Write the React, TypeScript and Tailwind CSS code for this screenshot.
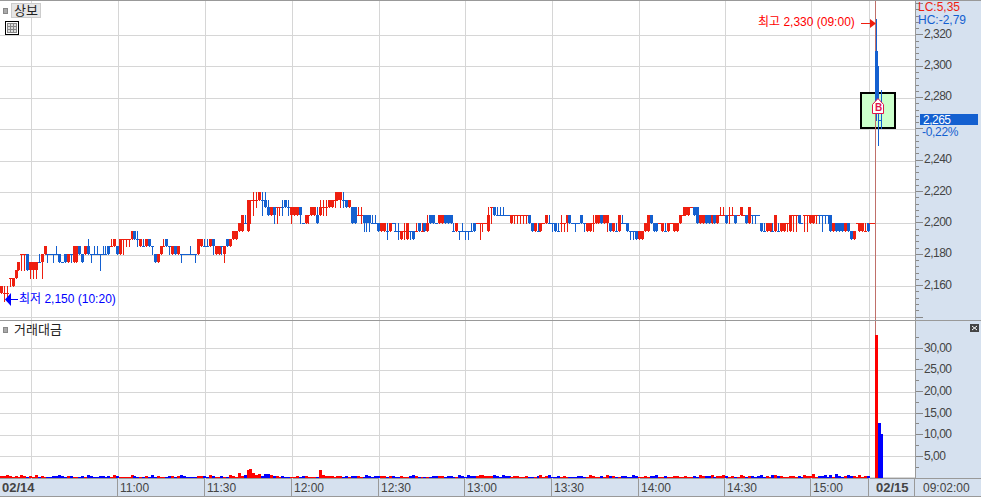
const fontStack = "[font-family:'Liberation_Sans','Noto_Sans_CJK_KR',sans-serif]";

// c top bottom [high low], levels are 5-won ticks: a = 2,200
const tape = `r21 r1120 r1120 r3332 r32 r43 r54 r6654 r6654 b64 r5453 r5453 r5453 b5565 r6563 r76
b6665 b66 b6665 b6676 b65 b55 b65 r65 b6665 r75 r75 b76 b65 r76 b7686 b6665 b6676 b6676 b6664 b6676 b6676 b76
r7787 r87 b76 r86 r8886 r8887 r8887 r98 b98 b8897 r87 b7787 r87 b87 b7766 b65 r65 r76 r7787 b87 b7766 r76 b76 r76
b6665 b66 b66 b6676 b66 b6665 r86 r87 b7787 b7787 r87 b8786 r76 r76 b7766 r7675 b87 r87 r98 r98 ra9 rb9 baaba
rd9 rddda rddeb rddec red bddeb bdcec bcbdb rcb bcbca rccca rcccb bccdb bdcdc bccdb rcbca rcb rcb bcbca baa
rba rbbba rcb rcb bbacb rcbdb rccdb rccdb rdc rdc rddec red redec bddec bdc rdc bca bca rbbcb rbbca
bbab9 bbab9 bbab9 baaba baaba ba9 ra9 ra9 b99a8 ra9 baa b99a9 b99a8 r98 r99a8 ra8 b9998 b98 r99a9 ba9 r99a9 ba9
ra9b9 bba bba baa rba rba bba bba bba b99a9 ra9 b9998 b99a9 b9998 b9998 b99a9 ba9 raa raaa8 raaa9 raa
rb9cb rccca bcb bbbcb bbbcb bbbcb bbb bbb rba rbbba rbbba rbbba rbbba rbbba bba ba9 ra9 b99a9 ra9 raa rba baaba
baaa9 ba9 b99a9 raab9 raaa9 rbab9 bba baa baaa9 baa bba baaa9 ra9 ra9 raab9 rba rba bba rba rbab9 ba9 ra9 b99a9
rb9 baaba baa ba9 b9998 b9998 b98 r98 r98 ra9 rb9 bba ba9 ba9 raa ra9 b99a9 ra9 raa ra9 ra9
rba rbbcb rcb rcb rcc bcb bca rba rba bba bba rba bba rba rbbcb rbbcb bba rbbca rbbcb bba rbb rcb rbb bba rca
bbbba bbbba bbb ba9 b99a9 ra9 ra9 b99a9 rb9 b99a9 ra9 ra9 raaa9 rb9 rbbb9 rbbb9 bba baa rbbb9 rbbb9 rba rba
rbbba bbbba bbba9 bbbba bbbba bb9 ra9 ba9 ba9 ba9 ra9 ba9 b98 r98 raa ra9 ra9 r99a9 ba9`;

type Bar = { color: string; top: number; bottom: number; high: number; low: number };

const red = "#ee1f10";
const blue = "#1460d0";

const levelY = (level: number) => 222 - (level - 10) * 7.83;

const bars: Bar[] = tape
  .split(/\s+/)
  .filter(Boolean)
  .map((t) => {
    const v = t.slice(1).split("").map((ch) => parseInt(ch, 16));
    const body = [v[0], v[1]];
    return {
      color: t[0] === "r" ? red : blue,
      top: Math.max(...body),
      bottom: Math.min(...body),
      high: Math.max(...v),
      low: Math.min(...v),
    };
  });

// one digit per bar, bar height in px
const volumes =
  "2232121321213121112232122111213211221213" +
  "2111132111213121112212321111222132112113" +
  "2152389534244322121111212211118322212212" +
  "1222113212222122112112321111122221221132" +
  "1322233222321322122112111231231121211112" +
  "2113211213221122113211212231121122112112" +
  "1322231223212113212212312133221122121322" +
  "4122313142123221312231425";

const hLines = [34, 65, 97, 128, 160, 191, 222, 254, 285, 316];
const vLines = [31, 118, 205, 292, 379, 465, 552, 639, 725, 811, 869];
const volLines = [348, 370, 392, 413, 435, 456];

// the 2,260 row sits under the current price box
const prices = ["2,320", "2,300", "2,280", "", "2,240", "2,220", "2,200", "2,180", "2,160"];
const priceTicks = Array.from({ length: 51 }, (_, i) => i).filter((i) => 2 + i * 6.27 < 319);
const volTicks = Array.from({ length: 13 }, (_, i) => i);

const times = [
  { label: "02/14", w: "w-[118px]", cls: "font-bold text-[13px] pl-[2px]" },
  { label: "11:00", w: "w-[87px]", cls: "pl-[2px]" },
  { label: "11:30", w: "w-[87px]", cls: "pl-[2px]" },
  { label: "12:00", w: "w-[87px]", cls: "pl-[2px]" },
  { label: "12:30", w: "w-[86px]", cls: "pl-[2px]" },
  { label: "13:00", w: "w-[87px]", cls: "pl-[2px]" },
  { label: "13:30", w: "w-[87px]", cls: "pl-[2px]" },
  { label: "14:00", w: "w-[86px]", cls: "pl-[2px]" },
  { label: "14:30", w: "w-[86px]", cls: "pl-[2px]" },
  { label: "15:00", w: "w-[58px]", cls: "pl-[2px]" },
  { label: "02/15", w: "w-[46px]", cls: "font-bold text-[13px] pl-[7px]" },
];

function PriceChart() {
  return (
    <svg width={915} height={319} className="absolute left-0 top-0" shapeRendering="crispEdges">
      {hLines.map((y) => (
        <rect key={y} x={0} y={y} width={915} height={1} fill="#d6d6d6" />
      ))}
      {vLines.map((x) => (
        <rect key={x} x={x} y={0} width={1} height={319} fill="#d6d6d6" />
      ))}
      {/* buy marker box */}
      <rect x={861} y={92} width={34} height={35} fill="#ccffcc" stroke="#000" strokeWidth={2} />
      {bars.map((b, i) => {
        const x = Math.round(i * 2.9);
        const t = Math.round(levelY(b.top));
        const bt = Math.round(levelY(b.bottom));
        return (
          <g key={i} fill={b.color}>
            <rect x={x + 1} y={Math.round(levelY(b.high))} width={1} height={Math.round(levelY(b.low)) - Math.round(levelY(b.high)) + 1} />
            <rect x={x} y={t} width={3} height={Math.max(bt - t, 1)} />
          </g>
        );
      })}
      <rect x={869} y={222} width={6} height={1} fill={red} />
      <rect x={875} y={0} width={1} height={319} fill="#c0706a" />
      {/* today's first bars */}
      <g fill={blue}>
        <rect x={876} y={18} width={1} height={102} />
        <rect x={875} y={50} width={3} height={50} />
        <rect x={877} y={65} width={2} height={35} />
        <rect x={878} y={100} width={1} height={45} />
        <rect x={881} y={89} width={1} height={39} />
        <rect x={879} y={119} width={3} height={1} />
      </g>
      {/* B marker */}
      <path d="M872.5 112.5V103.5L878 97.5L883.5 103.5V112.5Z" fill="#fff" stroke="#e0144c" shapeRendering="auto" />
      {/* high / low arrows */}
      <rect x={861} y={22} width={10} height={1} fill={red} />
      <path d="M870 18L876 22.5L870 27Z" fill={red} shapeRendering="auto" />
      <rect x={10} y={298} width={8} height={1} fill="#0000ff" />
      <path d="M11 292L5 298.5L11 305Z" fill="#0000ff" shapeRendering="auto" />
    </svg>
  );
}

function VolumeChart() {
  return (
    <svg width={915} height={158} viewBox="0 321 915 158" className="absolute left-0 top-0" shapeRendering="crispEdges">
      {volLines.map((y) => (
        <rect key={y} x={0} y={y} width={915} height={1} fill="#d6d6d6" />
      ))}
      <rect x={0} y={477} width={915} height={1} fill="#d6d6d6" />
      {vLines.map((x) => (
        <rect key={x} x={x} y={321} width={1} height={158} fill="#d6d6d6" />
      ))}
      {bars.slice(0, volumes.length).map((b, i) => {
        const h = Number(volumes[i]);
        return <rect key={i} x={Math.round(i * 2.9)} y={478 - h} width={3} height={h} fill={b.color === red ? "#ff0000" : "#0000ff"} />;
      })}
      <rect x={875} y={321} width={1} height={14} fill="#c0706a" />
      <rect x={875} y={335} width={3} height={143} fill="#ff0000" />
      <rect x={878} y={423} width={3} height={55} fill="#0000ff" />
      <rect x={880} y={434} width={3} height={44} fill="#0000ff" />
    </svg>
  );
}

export default function App() {
  return (
    <div className={`w-[981px] h-[498px] flex flex-col bg-white overflow-hidden text-[12px] leading-none text-[#444] ${fontStack}`}>
      {/* Price pane */}
      <div className="h-[320px] flex border-t border-[#999]">
        <div className="relative w-[915px]">
          <PriceChart />
          <div className="relative flex items-center gap-[3px] pl-[3px] pt-[2px]">
            <span className="w-[5px] h-[6px] bg-[#aaa] border border-[#888]" />
            <span className="w-[30px] h-[15px] flex items-center justify-center bg-[#e6e6e6] border border-[#ccc] text-[13px] text-[#222]">
              상보
            </span>
          </div>
          <div className="relative ml-[5px] mt-[3px] w-[14px] h-[14px] border border-black bg-white p-[1px]">
            <div className="grid grid-cols-3 grid-rows-3 gap-px w-full h-full bg-[#888] border border-[#888]">
              {Array.from({ length: 9 }, (_, i) => (
                <span key={i} className="bg-[#ddd]" />
              ))}
            </div>
          </div>
          <span className="absolute left-[758px] top-[15px] text-[#ff0000] whitespace-nowrap">최고 2,330 (09:00)</span>
          <span className="absolute left-[19px] top-[292px] text-[#0000ff] whitespace-nowrap">최저 2,150 (10:20)</span>
          <span className="absolute left-[875px] top-[102px] w-[6px] text-center text-[10px] font-bold text-[#e0144c]">B</span>
        </div>
        <div className="relative w-[66px] bg-[#d6e1ef] border-l border-[#999]">
          <svg width={8} height={319} className="absolute left-0 top-0" shapeRendering="crispEdges">
            {priceTicks.map((i) => (
              <rect key={i} x={0} y={Math.round(2 + i * 6.27)} width={i % 5 === 0 ? 7 : 3} height={1} fill="#888" />
            ))}
          </svg>
          <div className="relative text-[#ee1f10] pl-[2px] h-[13px] whitespace-nowrap">LC:5,35</div>
          <div className="relative text-[#1460d0] pl-[2px] h-[13px] whitespace-nowrap">HC:-2,79</div>
          <div className="relative flex flex-col pl-[8px] -mt-[9px] tracking-[-0.5px]">
            {prices.map((p, i) => (
              <div key={i} className="h-[31.4px] flex items-center">
                {p}
              </div>
            ))}
          </div>
          <div className="absolute left-[4px] top-[113px] w-[58px] h-[11px] bg-[#1460d0] text-white pl-[3px] flex items-center tracking-[-0.5px]">2,265</div>
          <div className="absolute left-[6px] top-[125px] text-[#1460d0] tracking-[-0.3px]">-0,22%</div>
        </div>
      </div>
      {/* Volume pane */}
      <div className="h-[158px] flex border-t border-[#999]">
        <div className="relative w-[915px]">
          <VolumeChart />
          <div className="relative flex items-center gap-[6px] pl-[3px] pt-[2px]">
            <span className="w-[5px] h-[6px] bg-[#aaa] border border-[#888]" />
            <span className="text-[13px] text-[#222]">거래대금</span>
          </div>
        </div>
        <div className="relative w-[66px] bg-[#d6e1ef] border-l border-[#999]">
          <svg width={8} height={158} className="absolute left-0 top-0" shapeRendering="crispEdges">
            {volTicks.map((i) => (
              <rect key={i} x={0} y={Math.round(16 + i * 10.8)} width={i % 2 === 1 ? 7 : 3} height={1} fill="#888" />
            ))}
          </svg>
          <svg width={9} height={8} viewBox="0 0 9 8" className="absolute left-[54px] top-[3px]">
            <rect width={9} height={8} fill="#444" />
            <path d="M2 2L7 6M7 2L2 6" stroke="#fff" strokeWidth={1} />
          </svg>
          <div className="relative flex flex-col pl-[8px] pt-[16px] tracking-[-0.5px]">
            {["30,00", "25,00", "20,00", "15,00", "10,00", "5,00"].map((v) => (
              <div key={v} className="h-[21.6px] flex items-center">
                {v}
              </div>
            ))}
          </div>
        </div>
      </div>
      {/* Time axis */}
      <div className="h-[19px] flex bg-[#d6e1ef] border-y border-[#999]">
        {times.map((t) => (
          <div key={t.label} className={`${t.w} h-full flex items-center border-r border-[#999] ${t.cls}`}>
            {t.label}
          </div>
        ))}
        <div className="flex-1 flex items-center pl-[8px]">09:02:00</div>
      </div>
    </div>
  );
}
